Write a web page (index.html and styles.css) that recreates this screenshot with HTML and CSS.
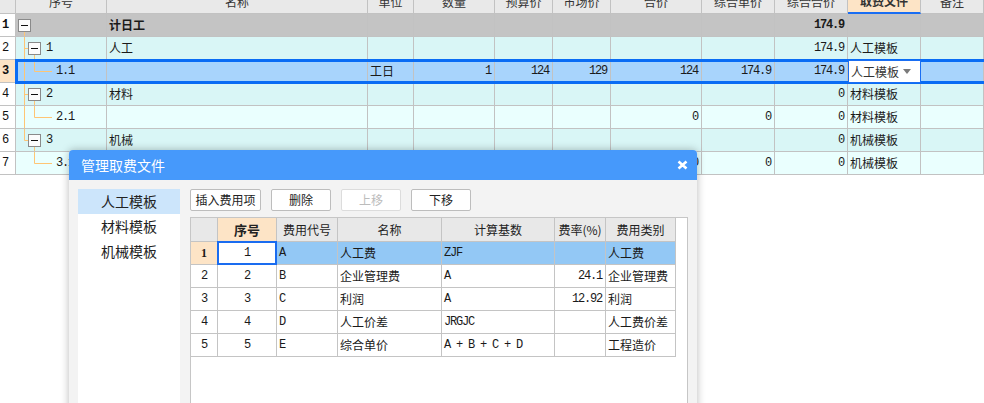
FILE: index.html
```
<!DOCTYPE html>
<html lang="zh">
<head>
<meta charset="utf-8">
<title>管理取费文件</title>
<link rel="stylesheet" href="styles.css">
</head>
<body>
<div class="grid">
  <div class="row head">
    <div class="cell rh"></div>
    <div class="cell c">序号</div>
    <div class="cell c">名称</div>
    <div class="cell c">单位</div>
    <div class="cell c">数量</div>
    <div class="cell c">预算价</div>
    <div class="cell c">市场价</div>
    <div class="cell c">合价</div>
    <div class="cell c">综合单价</div>
    <div class="cell c">综合合价</div>
    <div class="cell c active-col">取费文件</div>
    <div class="cell c">备注</div>
  </div>

  <div class="row total">
    <div class="cell rh b">1</div>
    <div class="cell tree"><svg width="28" height="23" class="tr"><line x1="8.5" y1="17" x2="8.5" y2="23"/><rect x="2.5" y="5.5" width="12" height="12" class="bx"/><line x1="5" y1="11.5" x2="12" y2="11.5" class="mn"/></svg></div>
    <div class="cell b">计日工</div>
    <div class="cell"></div><div class="cell"></div><div class="cell"></div><div class="cell"></div><div class="cell"></div><div class="cell"></div>
    <div class="cell r num b">174.9</div>
    <div class="cell"></div><div class="cell"></div>
  </div>

  <div class="row dk">
    <div class="cell rh">2</div>
    <div class="cell tree"><svg width="28" height="23" class="tr"><line x1="8.5" y1="0" x2="8.5" y2="23"/><line x1="8.5" y1="11.5" x2="12.5" y2="11.5"/><line x1="18.5" y1="17" x2="18.5" y2="23"/><rect x="12.5" y="5.5" width="12" height="12" class="bx"/><line x1="15" y1="11.5" x2="22" y2="11.5" class="mn"/></svg><span class="num tt">1</span></div>
    <div class="cell">人工</div>
    <div class="cell"></div><div class="cell"></div><div class="cell"></div><div class="cell"></div><div class="cell"></div><div class="cell"></div>
    <div class="cell r num">174.9</div>
    <div class="cell">人工模板</div>
    <div class="cell"></div>
  </div>

  <div class="row sel">
    <div class="cell rh b cur">3</div>
    <div class="cell tree"><svg width="38" height="23" class="tr"><line x1="8.5" y1="0" x2="8.5" y2="23"/><line x1="18.5" y1="0" x2="18.5" y2="11.5"/><line x1="18.5" y1="11.5" x2="36" y2="11.5"/></svg><span class="num tt">1.1</span></div>
    <div class="cell"></div>
    <div class="cell">工日</div>
    <div class="cell r num">1</div>
    <div class="cell r num">124</div>
    <div class="cell r num">129</div>
    <div class="cell r num">124</div>
    <div class="cell r num">174.9</div>
    <div class="cell r num">174.9</div>
    <div class="cell dd"><span>人工模板</span><svg width="8" height="5" class="caret"><path d="M0 0H8L4 5Z"/></svg></div>
    <div class="cell"></div>
  </div>

  <div class="row dk">
    <div class="cell rh">4</div>
    <div class="cell tree"><svg width="28" height="23" class="tr"><line x1="8.5" y1="0" x2="8.5" y2="23"/><line x1="8.5" y1="11.5" x2="12.5" y2="11.5"/><line x1="18.5" y1="17" x2="18.5" y2="23"/><rect x="12.5" y="5.5" width="12" height="12" class="bx"/><line x1="15" y1="11.5" x2="22" y2="11.5" class="mn"/></svg><span class="num tt">2</span></div>
    <div class="cell">材料</div>
    <div class="cell"></div><div class="cell"></div><div class="cell"></div><div class="cell"></div><div class="cell"></div><div class="cell"></div>
    <div class="cell r num">0</div>
    <div class="cell">材料模板</div>
    <div class="cell"></div>
  </div>

  <div class="row lt">
    <div class="cell rh">5</div>
    <div class="cell tree"><svg width="38" height="23" class="tr"><line x1="8.5" y1="0" x2="8.5" y2="23"/><line x1="18.5" y1="0" x2="18.5" y2="11.5"/><line x1="18.5" y1="11.5" x2="36" y2="11.5"/></svg><span class="num tt">2.1</span></div>
    <div class="cell"></div>
    <div class="cell"></div><div class="cell"></div><div class="cell"></div><div class="cell"></div>
    <div class="cell r num">0</div>
    <div class="cell r num">0</div>
    <div class="cell r num">0</div>
    <div class="cell">材料模板</div>
    <div class="cell"></div>
  </div>

  <div class="row dk">
    <div class="cell rh">6</div>
    <div class="cell tree"><svg width="28" height="23" class="tr"><line x1="8.5" y1="0" x2="8.5" y2="11.5"/><line x1="8.5" y1="11.5" x2="12.5" y2="11.5"/><line x1="18.5" y1="17" x2="18.5" y2="23"/><rect x="12.5" y="5.5" width="12" height="12" class="bx"/><line x1="15" y1="11.5" x2="22" y2="11.5" class="mn"/></svg><span class="num tt">3</span></div>
    <div class="cell">机械</div>
    <div class="cell"></div><div class="cell"></div><div class="cell"></div><div class="cell"></div><div class="cell"></div><div class="cell"></div>
    <div class="cell r num">0</div>
    <div class="cell">机械模板</div>
    <div class="cell"></div>
  </div>

  <div class="row lt">
    <div class="cell rh">7</div>
    <div class="cell tree"><svg width="38" height="23" class="tr"><line x1="18.5" y1="0" x2="18.5" y2="11.5"/><line x1="18.5" y1="11.5" x2="36" y2="11.5"/></svg><span class="num tt">3.1</span></div>
    <div class="cell"></div>
    <div class="cell"></div><div class="cell"></div><div class="cell"></div><div class="cell"></div>
    <div class="cell r num">0</div>
    <div class="cell r num">0</div>
    <div class="cell r num">0</div>
    <div class="cell">机械模板</div>
    <div class="cell"></div>
  </div>
</div>

<div class="dialog">
  <div class="dlg-title">
    <span>管理取费文件</span>
    <svg width="11" height="10" class="close"><path d="M1.5 1.5L9.5 8.5M9.5 1.5L1.5 8.5"/></svg>
  </div>
  <div class="dlg-body">
    <ul class="side">
      <li class="on">人工模板</li>
      <li>材料模板</li>
      <li>机械模板</li>
    </ul>
    <div class="pane">
      <div class="toolbar">
        <button class="btn wide">插入费用项</button>
        <button class="btn">删除</button>
        <button class="btn off">上移</button>
        <button class="btn">下移</button>
      </div>
      <div class="tbl">
        <div class="trow thead">
          <div class="tc"></div>
          <div class="tc c key">序号</div>
          <div class="tc c">费用代号</div>
          <div class="tc c">名称</div>
          <div class="tc c">计算基数</div>
          <div class="tc c">费率(%)</div>
          <div class="tc c">费用类别</div>
        </div>
        <div class="trow tsel">
          <div class="tc c rn b">1</div>
          <div class="tc c num focus">1</div>
          <div class="tc num">A</div>
          <div class="tc">人工费</div>
          <div class="tc num">ZJF</div>
          <div class="tc r num"></div>
          <div class="tc">人工费</div>
        </div>
        <div class="trow">
          <div class="tc c num">2</div>
          <div class="tc c num">2</div>
          <div class="tc num">B</div>
          <div class="tc">企业管理费</div>
          <div class="tc num">A</div>
          <div class="tc r num">24.1</div>
          <div class="tc">企业管理费</div>
        </div>
        <div class="trow">
          <div class="tc c num">3</div>
          <div class="tc c num">3</div>
          <div class="tc num">C</div>
          <div class="tc">利润</div>
          <div class="tc num">A</div>
          <div class="tc r num">12.92</div>
          <div class="tc">利润</div>
        </div>
        <div class="trow">
          <div class="tc c num">4</div>
          <div class="tc c num">4</div>
          <div class="tc num">D</div>
          <div class="tc">人工价差</div>
          <div class="tc num">JRGJC</div>
          <div class="tc r num"></div>
          <div class="tc">人工费价差</div>
        </div>
        <div class="trow">
          <div class="tc c num">5</div>
          <div class="tc c num">5</div>
          <div class="tc num">E</div>
          <div class="tc">综合单价</div>
          <div class="tc num">A + B + C + D</div>
          <div class="tc r num"></div>
          <div class="tc">工程造价</div>
        </div>
      </div>
    </div>
  </div>
</div>
</body>
</html>
```

FILE: styles.css
```
html, body {
  margin: 0;
  padding: 0;
  overflow: hidden;
  background: #ffffff;
}
body {
  font-family: "Noto Sans CJK SC", "Noto Sans", sans-serif;
  font-size: 12px;
  color: #1a1a1a;
  width: 984px;
  height: 403px;
  position: relative;
}
.grid {
  width: 984px;
}
.row {
  display: grid;
  grid-template-columns: 16px 91px 261px 46px 81px 58px 58px 91px 73px 73px 73px 63px;
  height: 23px;
}
.cell {
  box-sizing: border-box;
  border-right: 1px solid #c2c2c2;
  border-bottom: 1px solid #c2c2c2;
  display: flex;
  align-items: center;
  padding: 0 2px;
  white-space: nowrap;
  overflow: hidden;
  line-height: 14px;
}
.cell.r { justify-content: flex-end; padding-right: 3px; }
.cell.c { justify-content: center; }
.b { font-weight: bold; }
.num {
  font-family: "Liberation Mono", monospace;
  font-size: 12px;
  letter-spacing: -1.2px;
}
.head {
  height: 24px;
  margin-top: -10px;
  background: #e9e9e9;
  color: #333;
}
.head .active-col {
  background: #fde4c6;
  font-weight: bold;
  border-bottom: 2px solid #1a6ef3;
}
.rh {
  background: #ffffff;
  font-family: "Liberation Mono", monospace;
  font-size: 12px;
  padding: 0 0 0 2px;
  color: #111;
}
.head .rh { background: #e9e9e9; }
.rh.cur { background: #fde4c6; }
.total { background: #c4c4c4; }
.total .rh { background: #fff; }
.dk { background: #d9f6f6; }
.lt { background: #eafffe; }
.sel { background: #a8d4fc; position: relative; }
.sel::after {
  content: "";
  position: absolute;
  left: 15px;
  right: -4px;
  top: -1px;
  bottom: -1px;
  border: 3px solid #0a6cf4;
  pointer-events: none;
}
.tree { padding: 0; align-items: flex-start; }
.tree .tt { margin-left: 2px; align-self: center; }
.tr { display: block; overflow: visible; flex: none; }
.tr line { stroke: #ffc574; stroke-width: 1; }
.tr .bx { fill: #fcfcfc; stroke: #8a8a8a; stroke-width: 1; }
.tr line.mn { stroke: #111; }
.dd {
  background: #ffffff;
  border: 1px solid #1a6ef3;
  justify-content: space-between;
  padding: 0 9px 0 2px;
  color: #333;
  position: relative;
  z-index: 2;
}
.caret { fill: #7a7a7a; display: block; }

/* dialog */
.dialog {
  position: absolute;
  left: 69px;
  top: 150px;
  width: 628px;
  height: 275px;
  background: #f3f3f3;
  border-radius: 4px 4px 0 0;
  box-shadow: 0 0 8px rgba(0, 0, 0, 0.28);
  z-index: 5;
  overflow: hidden;
}
.dlg-title {
  height: 30px;
  background: #4699fb;
  color: #ffffff;
  font-size: 14px;
  display: flex;
  align-items: center;
  justify-content: space-between;
  padding: 0 9px 0 12px;
  line-height: 16px;
}
.close { display: block; }
.close path { stroke: #ffffff; stroke-width: 2.6; fill: none; }
.dlg-body {
  display: flex;
  gap: 10px;
  padding: 9px 0 0 9px;
  height: 240px;
}
.side {
  list-style: none;
  margin: 0;
  padding: 0;
  width: 102px;
  background: #ffffff;
  font-size: 14px;
  color: #222;
}
.side li {
  height: 25px;
  line-height: 25px;
  text-align: center;
}
.side li.on { background: #cce5fb; }
.pane {
  width: 498px;
  display: flex;
  flex-direction: column;
}
.toolbar {
  display: flex;
  gap: 10px;
  height: 22px;
}
.btn {
  box-sizing: border-box;
  width: 60px;
  height: 22px;
  border: 1px solid #bdbdbd;
  border-radius: 2px;
  background: #ffffff;
  font-family: "Noto Sans CJK SC", sans-serif;
  font-size: 12px;
  color: #222;
  padding: 0;
  line-height: 18px;
}
.btn.wide { width: 71px; }
.btn.off { color: #bcbcbc; border-color: #dcdcdc; }
.tbl {
  margin-top: 6px;
  flex: 1;
  background: #ffffff;
  border: 1px solid #c6c6c6;
}
.trow {
  display: grid;
  grid-template-columns: 27px 59px 61px 104px 113px 51px 70px;
  height: 23px;
}
.tc {
  box-sizing: border-box;
  border-right: 1px solid #c4c4c4;
  border-bottom: 1px solid #c4c4c4;
  display: flex;
  align-items: center;
  padding: 0 2px;
  white-space: nowrap;
  overflow: hidden;
  line-height: 14px;
}
.tc.c { justify-content: center; }
.tc.r { justify-content: flex-end; padding-right: 3px; }
.thead { height: 24px; color: #222; }
.thead .tc { background: #e8e8e8; }
.thead .key { background: #fde4c6; font-weight: bold; font-size: 13px; }
.tsel .tc { background: #93c8f5; }
.tsel .rn {
  background: #fde4c6;
  font-family: "Liberation Serif", serif;
  font-size: 12px;
}
.tsel .focus {
  background: #ffffff;
  position: relative;
  overflow: visible;
}
.tsel .focus::after {
  content: "";
  position: absolute;
  left: -1px;
  right: -1px;
  top: -1px;
  bottom: -1px;
  border: 2px solid #1a6cf0;
}
```
